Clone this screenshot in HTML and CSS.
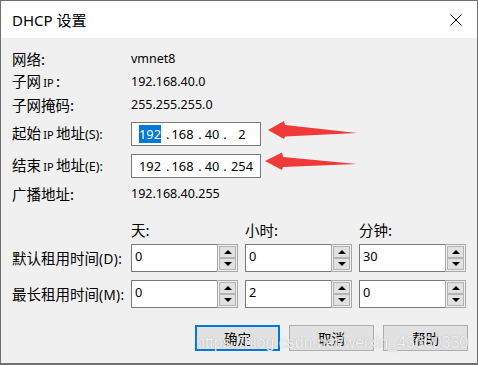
FILE: index.html
```html
<!DOCTYPE html>
<html lang="zh-CN">
<head>
<meta charset="utf-8">
<title>DHCP 设置</title>
<link rel="stylesheet" href="styles.css">
</head>
<body>
<div class="window">
  <div class="titlebar">
    <span class="title">DHCP 设置</span>
    <svg class="close" width="12" height="12" viewBox="0 0 12 12"><path d="M0.5 0.5 L11.5 11.5 M11.5 0.5 L0.5 11.5" stroke="#000" stroke-width="1" fill="none"/></svg>
  </div>
  <div class="content">
    <div class="row info r1"><span class="label">网络:</span><span class="value">vmnet8</span></div>
    <div class="row info"><span class="label">子网<span class="ipl">IP</span>:</span><span class="value">192.168.40.0</span></div>
    <div class="row info"><span class="label">子网掩码:</span><span class="value">255.255.255.0</span></div>
    <div class="row ip r4"><span class="label">起始<span class="ipl">IP</span>地址<span class="lat">(S):</span></span>
      <div class="ipbox"><span class="f f1"><span class="sel">192</span></span><span class="d d1">.</span><span class="f f2">168</span><span class="d d2">.</span><span class="f f3">40</span><span class="d d3">.</span><span class="f f4">2</span></div>
    </div>
    <div class="row ip r5"><span class="label">结束<span class="ipl">IP</span>地址<span class="lat">(E):</span></span>
      <div class="ipbox"><span class="f f1">192</span><span class="d d1">.</span><span class="f f2">168</span><span class="d d2">.</span><span class="f f3">40</span><span class="d d3">.</span><span class="f f4">254</span></div>
    </div>
    <div class="row info r6"><span class="label">广播地址:</span><span class="value">192.168.40.255</span></div>
    <div class="row heads"><span class="label"></span><span class="head">天:</span><span class="head">小时:</span><span class="head">分钟:</span></div>
    <div class="row spinrow s1"><span class="label">默认租用时间<span class="lat">(D):</span></span>
      <div class="spin"><div class="st">0</div><div class="sbs"><div class="sb up"></div><div class="sb down"></div></div></div>
      <div class="spin"><div class="st">0</div><div class="sbs"><div class="sb up"></div><div class="sb down"></div></div></div>
      <div class="spin"><div class="st">30</div><div class="sbs"><div class="sb up"></div><div class="sb down"></div></div></div>
    </div>
    <div class="row spinrow s2"><span class="label">最长租用时间<span class="lat">(M):</span></span>
      <div class="spin"><div class="st">0</div><div class="sbs"><div class="sb up"></div><div class="sb down"></div></div></div>
      <div class="spin"><div class="st">2</div><div class="sbs"><div class="sb up"></div><div class="sb down"></div></div></div>
      <div class="spin"><div class="st">0</div><div class="sbs"><div class="sb up"></div><div class="sb down"></div></div></div>
    </div>
    <div class="row buttons">
      <div class="btn default">确定</div>
      <div class="btn">取消</div>
      <div class="btn">帮助</div>
    </div>
  </div>
  <svg class="arrows" width="478" height="365" viewBox="0 0 478 365">
    <polygon points="268,130 284,121 285,125 357,133 285,136.5 284,139" fill="#f03a3a"/>
    <polygon points="265,161 282,152.5 283,157 357,164 283,167 282,170" fill="#f03a3a"/>
  </svg>
  <div class="watermark">https://blog.csdn.net/weixin_43660330</div>
</div>
</body>
</html>
```
FILE: styles.css
```css
html, body {
  margin: 0;
  padding: 0;
  background: #f0f0f0;
}
.window {
  position: relative;
  width: 478px;
  height: 365px;
  box-sizing: border-box;
  border: 1px solid #707070;
  border-bottom-width: 2px;
  background: #f0f0f0;
  font-family: "Noto Sans CJK SC", "Noto Sans", sans-serif;
  color: #000;
  overflow: hidden;
}
.titlebar {
  height: 37px;
  background: #fff;
  display: flex;
  align-items: center;
  justify-content: space-between;
  padding: 0 15px 0 11px;
}
.title {
  font-family: "Noto Sans", "Noto Sans CJK SC", sans-serif;
  font-size: 15px;
  line-height: 18px;
  color: #000;
}
.close {
  display: block;
}
.content {
  display: flex;
  flex-direction: column;
  padding: 9px 0 0 11px;
}
.row {
  display: flex;
  align-items: center;
}
.label {
  width: 119px;
  flex: none;
  font-size: 14.5px;
  line-height: 18px;
  white-space: nowrap;
}
.ipl {
  display: inline-block;
  width: 15px;
  text-align: center;
  font-family: "Noto Sans", sans-serif;
  font-size: 11px;
}
.lat {
  display: inline-block;
  font-family: "Noto Sans", sans-serif;
  font-size: 12.5px;
}
.value {
  font-family: "Noto Sans", sans-serif;
  font-size: 12.5px;
  line-height: 16px;
}
.info { height: 23px; }
.r6 { height: 22px; margin-top: 5px; }
.ip { height: 24px; }
.r4 { margin-top: 6px; }
.r5 { margin-top: 8px; }
.ipbox {
  box-sizing: border-box;
  width: 130px;
  height: 24px;
  background: #fff;
  border: 1px solid #7a7a7a;
  display: flex;
  align-items: center;
  padding-left: 2px;
  font-family: "Noto Sans", sans-serif;
  font-size: 12.8px;
  line-height: 14px;
}
.f, .d { display: block; text-align: center; }
.f1 { width: 32px; }
.d1 { width: 2px; }
.f2 { width: 29px; }
.d2 { width: 6px; }
.f3 { width: 18px; }
.d3 { width: 8px; }
.f4 { width: 26px; }
.sel {
  background: #0078d7;
  color: #fff;
  padding: 0;
}
.heads { height: 20px; margin-top: 15px; }
.head {
  width: 114px;
  font-size: 14.5px;
  line-height: 18px;
}
.spinrow { height: 28px; gap: 7px; }
.spinrow .label { margin-right: -7px; }
.spinrow .lat { font-size: 13.5px; letter-spacing: 0.4px; }
.s1 { margin-top: 4px; }
.s2 { margin-top: 8px; }
.spin {
  display: flex;
  width: 107px;
  height: 28px;
}
.st {
  box-sizing: border-box;
  width: 86px;
  height: 28px;
  background: #fff;
  border: 1px solid #7a7a7a;
  border-right: none;
  padding: 3px 0 0 3px;
  font-family: "Noto Sans", sans-serif;
  font-size: 12.8px;
  line-height: 16px;
}
.sbs {
  box-sizing: border-box;
  width: 21px;
  height: 28px;
  border: 1px solid #a8a8a8;
  background: #f0f0f0;
  padding: 1px;
  display: flex;
  flex-direction: column;
}
.sb {
  flex: 1;
  box-sizing: border-box;
  background: #e1e1e1;
  border: 1px solid #b4b4b4;
  display: flex;
  align-items: center;
  justify-content: center;
}
.sb::after {
  content: "";
  width: 0;
  height: 0;
  border-left: 4px solid transparent;
  border-right: 4px solid transparent;
}
.up::after { border-bottom: 4px solid #000; }
.down::after { border-top: 4px solid #000; }
.buttons {
  margin-top: 17px;
  height: 26px;
  justify-content: flex-end;
  gap: 9px;
  padding-right: 9px;
}
.btn {
  box-sizing: border-box;
  width: 85px;
  height: 26px;
  background: #e1e1e1;
  border: 1px solid #adadad;
  font-size: 13.5px;
  line-height: 24px;
  text-align: center;
}
.btn.default {
  border: 2px solid #0078d7;
  line-height: 22px;
}
.arrows {
  position: absolute;
  left: -1px;
  top: -1px;
  pointer-events: none;
}
.watermark {
  position: absolute;
  left: 195px;
  top: 333px;
  font-family: "Liberation Sans", Arial, sans-serif;
  font-size: 16px;
  line-height: 18px;
  color: rgba(255, 255, 255, 0.85);
  text-shadow: 0 0 1px rgba(90, 90, 90, 0.5);
  white-space: nowrap;
}
```
